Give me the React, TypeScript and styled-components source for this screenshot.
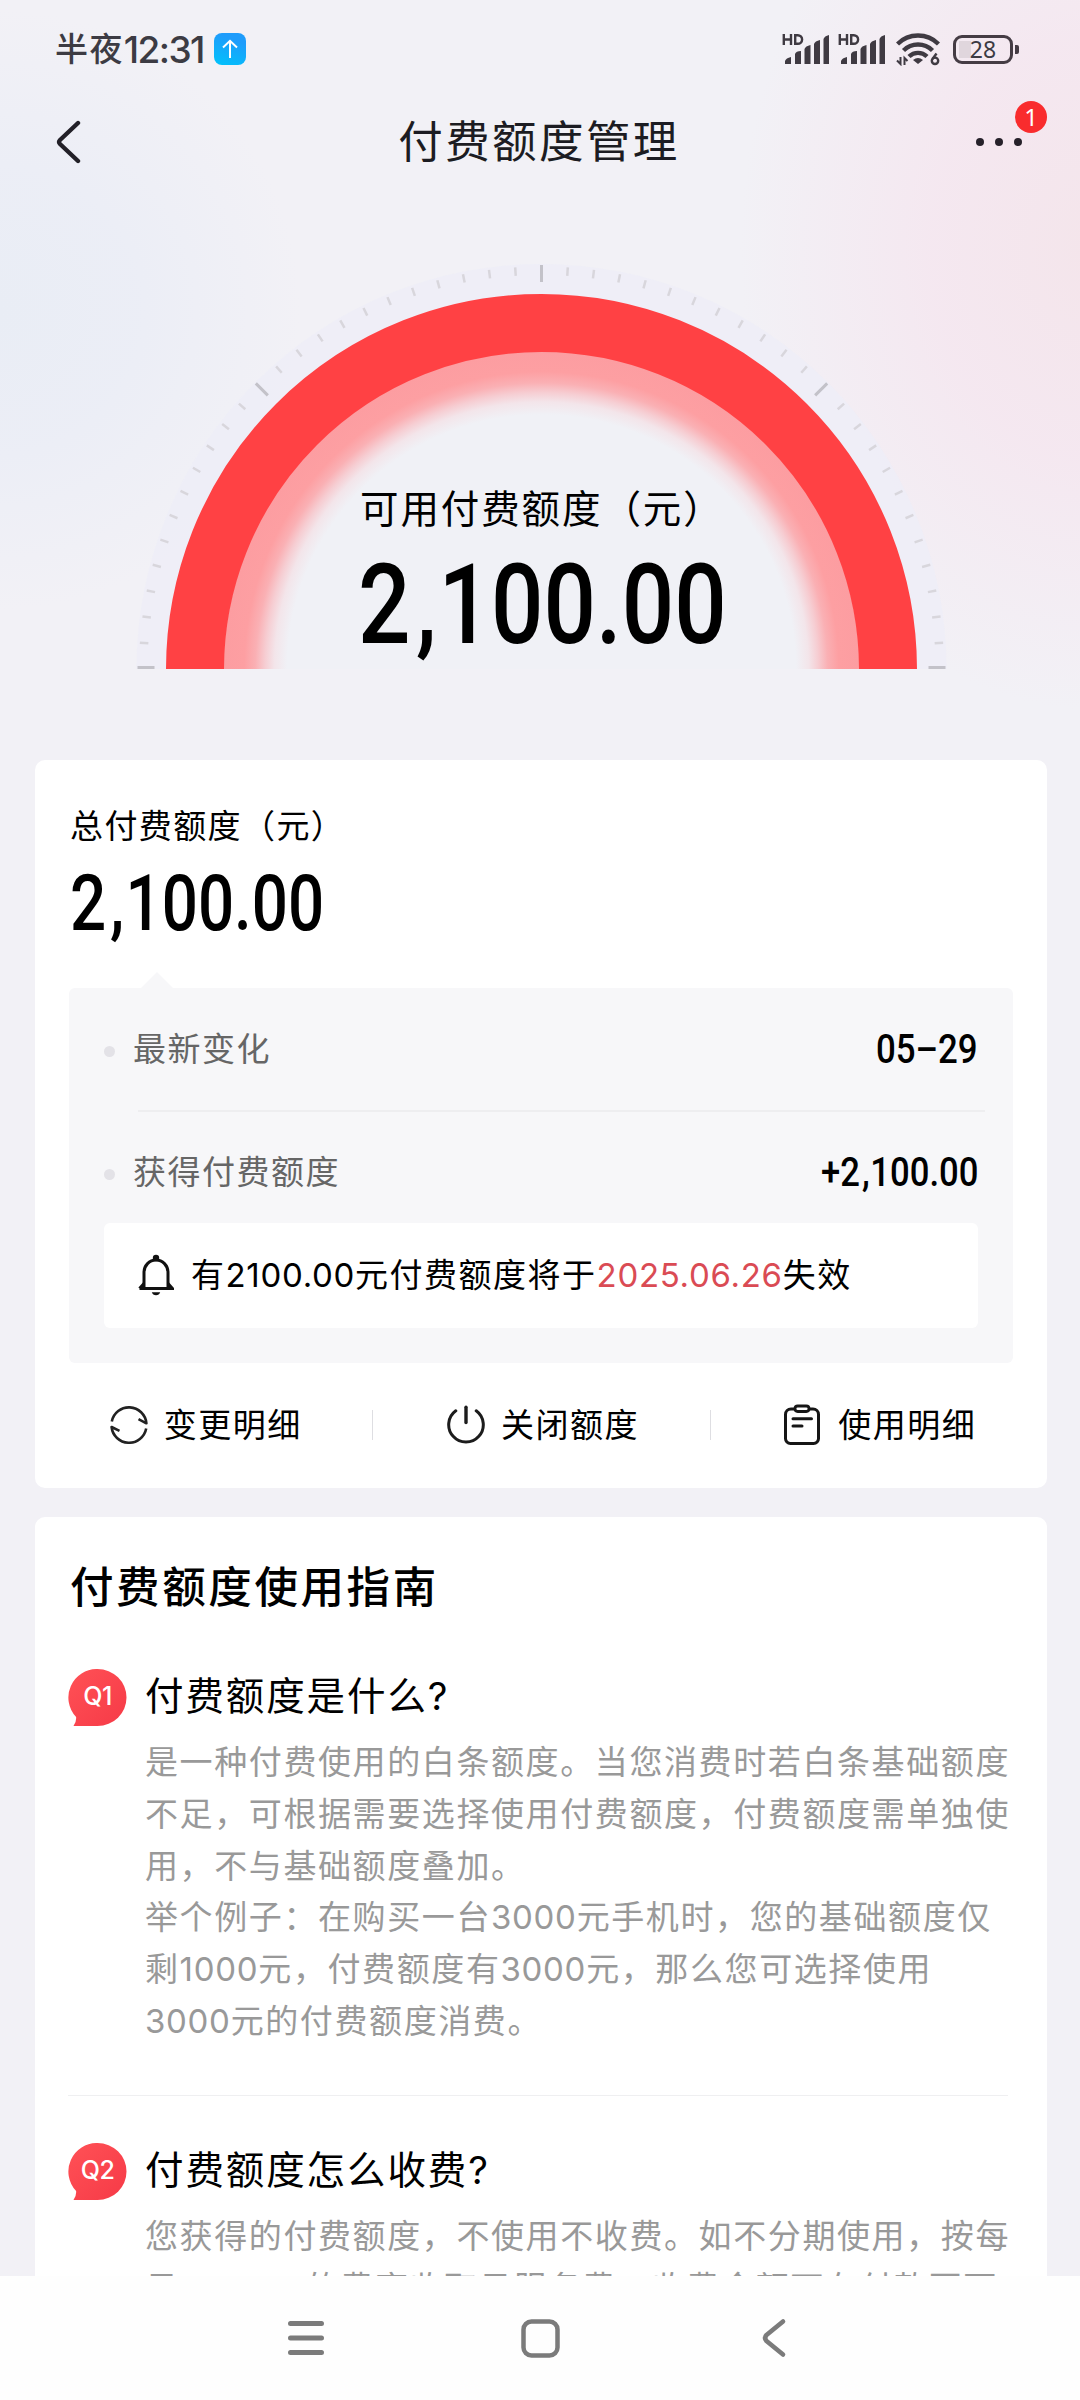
import React from "react";
import styled, { createGlobalStyle } from "styled-components";

const GlobalStyle = createGlobalStyle`
  *, *::before, *::after { box-sizing: border-box; }
  body {
    margin: 0;
    background: #f2f1f6;
    font-family: Inter, "Noto Sans CJK SC", sans-serif;
    text-spacing-trim: space-all;
    -webkit-font-smoothing: antialiased;
  }
  svg { display: block; flex: none; }
`;

const Screen = styled.div`
  width: 1080px;
  height: 2400px;
  display: flex;
  flex-direction: column;
  overflow: hidden;
  color: #000;
  background:
    radial-gradient(ellipse 350px 460px at 1090px 250px, #f4e5eb 0%, rgba(245, 230, 239, 0.85) 45%, rgba(243, 238, 245, 0) 100%),
    radial-gradient(ellipse 300px 300px at 0 310px, #e9edf5 0%, rgba(234, 237, 246, 0.8) 45%, rgba(242, 241, 246, 0) 100%),
    #f2f1f6;
`;

const Content = styled.main`
  height: 2276px;
  flex: none;
  display: flex;
  flex-direction: column;
  overflow: hidden;
`;

/* ---------- status bar ---------- */

const StatusBar = styled.div`
  flex: none;
  height: 98px;
  padding: 0 61px 0 55px;
  display: flex;
  align-items: center;
  justify-content: space-between;
  color: #3c3b43;
`;

const Clock = styled.div`
  display: flex;
  align-items: center;
  font-size: 33px;
  line-height: 44px;
  letter-spacing: 1.4px;
  font-weight: 500;
`;

const ClockDigits = styled.span`
  margin: 2px 10px 0 0;
  font-size: 37px;
  letter-spacing: -1.6px;
`;

const UploadChip = styled.span`
  width: 32px;
  height: 32px;
  border-radius: 8px;
  background: linear-gradient(20deg, #00c3fb, #1e9cfb 75%);
  display: grid;
  place-items: center;
`;

const StatusIcons = styled.div`
  display: flex;
  align-items: center;
`;

const Battery = styled.div`
  position: relative;
  margin-left: 13px;
  width: 60px;
  height: 29px;
  border: 3px solid #453c44;
  border-radius: 9px;
  background: linear-gradient(#e0d6dd, #e0d6dd) 3px 3px / 12px 17px no-repeat;
  display: grid;
  place-items: center;
  font-family: "Noto Sans", sans-serif;
  font-size: 23px;
  line-height: 23px;
  margin-right: 6px;

  &::after {
    content: "";
    position: absolute;
    right: -9px;
    top: 7px;
    width: 4px;
    height: 9px;
    border-radius: 0 2px 2px 0;
    background: #453c44;
  }
`;

/* ---------- title bar ---------- */

const TitleBar = styled.header`
  flex: none;
  height: 88px;
  padding: 0 58px 0 56px;
  display: grid;
  grid-template-columns: 1fr auto 1fr;
  align-items: center;
`;

const PageTitle = styled.h1`
  margin: 0;
  font-size: 44.5px;
  line-height: 60px;
  letter-spacing: 2.4px;
  font-weight: 400;
  color: #1c1c22;
`;

const More = styled.div`
  position: relative;
  justify-self: end;
  display: flex;
  gap: 11px;
`;

const Dot = styled.i`
  width: 8px;
  height: 8px;
  border-radius: 50%;
  background: #26212a;
`;

const Badge = styled.span`
  position: absolute;
  right: -25px;
  top: -37px;
  width: 32px;
  height: 32px;
  border-radius: 50%;
  background: #f92c2d;
  color: #fff;
  font-family: "Noto Sans", sans-serif;
  font-size: 24px;
  line-height: 32px;
  text-align: center;
`;

/* ---------- gauge ---------- */

const Gauge = styled.section`
  flex: none;
  display: grid;
  width: 812px;
  height: 407px;
  margin: 76px 0 91px 136px;

  > * { grid-area: 1 / 1; }
`;

const GaugeText = styled.div`
  z-index: 1;
  padding: 224px 0 0 222px;
`;

const GaugeLabel = styled.div`
  margin: 0 0 23px 2px;
  font-size: 38.5px;
  line-height: 46px;
  letter-spacing: 1.9px;
  white-space: nowrap;
`;

const Amount = styled.div<{ $size: number; $line: number; $scale?: number; $end?: boolean }>`
  width: max-content;
  font-family: Roboto, sans-serif;
  font-weight: 500;
  font-size: ${(p) => p.$size}px;
  line-height: ${(p) => p.$line}px;
  white-space: nowrap;
  transform: scaleX(${(p) => p.$scale ?? 0.85});
  transform-origin: ${(p) => (p.$end ? "right" : "left")} center;
`;

const Comma = styled.span`
  padding: 0 0.02em 0 0.06em;
`;

/* ---------- cards ---------- */

const Card = styled.section<{ $top: number }>`
  flex: none;
  margin: 0 33px 29px 35px;
  padding: ${(p) => p.$top}px 34px 0;
  border-radius: 10px;
  background: #fff;
`;

const CardLabel = styled.div`
  margin: 0 0 23px 1px;
  font-size: 33px;
  line-height: 40px;
  letter-spacing: 1.4px;
`;

const Total = styled.div`
  padding-left: 1px;
`;

const Panel = styled.div`
  position: relative;
  height: 375px;
  margin-top: 49px;
  padding: 0 35px;
  border-radius: 6px;
  background: #f7f7f9;

  &::before {
    content: "";
    position: absolute;
    left: 72px;
    top: -16px;
    border: 16px solid transparent;
    border-top: 0;
    border-bottom-color: #f7f7f9;
  }
`;

const Row = styled.div<{ $h: number; $shift?: number }>`
  height: ${(p) => p.$h}px;
  padding-top: ${(p) => p.$shift ?? 0}px;
  display: flex;
  align-items: center;
`;

const Bullet = styled.i`
  width: 11px;
  height: 11px;
  margin: 5px 18px 0 0;
  border-radius: 50%;
  background: #e3e2e7;
`;

const RowLabel = styled.span`
  flex: 1;
  font-size: 33px;
  line-height: 44px;
  letter-spacing: 1.5px;
  color: #666;
`;

const RowLine = styled.div`
  height: 2px;
  margin: 0 -7px 0 34px;
  background: #eeeef0;
`;

const Notice = styled.div`
  height: 105px;
  padding: 0 0 1px 34px;
  display: flex;
  align-items: center;
  gap: 17px;
  border-radius: 6px;
  background: #fff;
  font-size: 33px;
  line-height: 44px;
  letter-spacing: 1.5px;
  white-space: nowrap;
`;

const Figures = styled.span<{ $accent?: boolean }>`
  color: ${(p) => (p.$accent ? "#da4b54" : "inherit")};
  letter-spacing: 0.7px;
`;

const Actions = styled.div`
  height: 125px;
  margin: 0 -34px;
  padding-bottom: 1px;
  display: grid;
  grid-template-columns: repeat(3, 1fr);
  align-items: center;
`;

const Action = styled.div<{ $gap: number }>`
  height: 38px;
  padding-left: 4px;
  display: flex;
  align-items: center;
  justify-content: center;
  gap: ${(p) => p.$gap}px;
  font-size: 33px;
  letter-spacing: 1.5px;
  line-height: 38px;

  & + & {
    background: linear-gradient(#dedee2, #dedee2) 0 4px / 1px 30px no-repeat;
  }
`;

/* ---------- guide ---------- */

const GuideTitle = styled.h2`
  margin: 0 0 51px 1px;
  font-size: 43.5px;
  line-height: 60px;
  letter-spacing: 2.6px;
  font-weight: 500;
`;

const Faq = styled.article`
  display: grid;
  grid-template-columns: 58px 1fr;
  column-gap: 19px;
  margin-left: -1px;

  & + & {
    margin-top: 47px;
    margin-right: 5px;
    padding-top: 46px;
    border-top: 1px solid #efeff1;
  }
`;

const QMark = styled.div`
  display: grid;
  width: 59px;
  height: 57px;
  margin-top: 1px;
  color: #fff;
  font-size: 25px;
  line-height: 55px;
  letter-spacing: -0.5px;
  font-weight: 500;
  text-align: center;

  > * { grid-area: 1 / 1; }
  > span { z-index: 1; }
`;

const Question = styled.h3`
  margin: 0 0 13px;
  font-size: 38.5px;
  line-height: 56px;
  letter-spacing: 1.9px;
  font-weight: 400;
`;

const Answer = styled.div`
  grid-column: 2;
  font-size: 33px;
  line-height: 51.8px;
  letter-spacing: 1.6px;
  color: #999;
`;

const Line = styled.div`
  white-space: nowrap;
`;

/* ---------- system navigation ---------- */

const SystemNav = styled.nav`
  flex: none;
  height: 124px;
  padding: 0 293px 0 287px;
  display: flex;
  align-items: center;
  justify-content: space-between;
  background: #fefefe;

  > :nth-child(2) { margin-right: 7px; }
`;

/* ---------- drawings ---------- */

const Signal = ({ gap }: { gap: number }) => (
  <svg width="47" height="31" viewBox="0 0 47 31" style={{ marginLeft: gap }} fill="#3f3a42">
    <g stroke="#3f3a42" strokeWidth="2.4" fill="none">
      <path d="M1.8 0v11M9 0v11M1.8 5.5H9M13.2 1.200v8.600h2.600a4.300 4.300 0 0 0 0-8.600z" />
    </g>
    <path d="M3 30v-3q1-3 6-4v7zM13 30V20q1-3 6-3v13zM22.500 30V15q1-3 6-4v19zM32 30V10q1-3 6-4v24zM41.500 30V5q1-3 5.500-4v29z" />
  </svg>
);

const Wifi = () => (
  <svg width="44" height="34" viewBox="0 0 44 34" style={{ marginLeft: 11 }} fill="none" stroke="#3f3a42">
    <path d="M1.500 12a29 29 0 0 1 41 0" strokeWidth="4.400" />
    <path d="M7.500 18.500a20.500 20.500 0 0 1 29 0" strokeWidth="4.400" />
    <path d="M13 24.500a13 13 0 0 1 18 0" strokeWidth="4.400" />
    <path d="M22 32l-5-4q5-4 10 0z" fill="#3f3a42" stroke="none" />
    <path d="M1 28.500l3.500 3.500V25M8.500 33v-7l3 3" strokeWidth="2" />
    <circle cx="39" cy="28.800" r="3.200" strokeWidth="2.400" />
    <path d="M40.500 21.500l-4 5.500" strokeWidth="2.400" />
  </svg>
);

const CX = 405.5;
const CY = 407;

const ticks = Array.from({ length: 49 }, (_, i) => {
  const a = (i * 3.75 * Math.PI) / 180;
  const major = i % 12 === 0;
  const outer = major ? 404 : 402.5;
  const inner = major ? 387 : 394;
  const lift = i === 0 || i === 48 ? -1.5 : 0;
  return {
    major,
    x1: CX - outer * Math.cos(a),
    y1: CY - outer * Math.sin(a) + lift,
    x2: CX - inner * Math.cos(a),
    y2: CY - inner * Math.sin(a) + lift,
  };
});

const GaugeArc = () => (
  <svg width="812" height="407" viewBox="0 0 812 407">
    <defs>
      <radialGradient id="glow" gradientUnits="userSpaceOnUse" cx={CX} cy={CY} r="318">
        <stop offset="0.8" stopColor="#f0f1f6" />
        <stop offset="0.84" stopColor="#f3e5ea" />
        <stop offset="0.87" stopColor="#f6cdd2" />
        <stop offset="0.9" stopColor="#fab0b4" />
        <stop offset="0.935" stopColor="#fd9fa2" />
        <stop offset="1" stopColor="#fc9da1" />
      </radialGradient>
    </defs>
    <circle cx={CX} cy={CY} r="405" fill="#ededf7" opacity="0.8" />
    <circle cx={CX} cy={CY} r="318" fill="url(#glow)" />
    <circle cx={CX} cy={CY + 0.5} r="346.500" fill="none" stroke="#ff4144" strokeWidth="58" />
    {ticks.map((t, i) => (
      <line
        key={i}
        x1={t.x1}
        y1={t.y1}
        x2={t.x2}
        y2={t.y2}
        stroke={t.major ? "#c3c2c9" : "#d8d6dc"}
        strokeWidth={t.major ? 3 : 2.5}
      />
    ))}
  </svg>
);

const Bell = () => (
  <svg width="36" height="42" viewBox="0 0 36 42" fill="none" stroke="#111" strokeWidth="3">
    <path d="M6 34V18.500a12 12.500 0 0 1 24 0V34" />
    <path d="M1.500 34.500h33l-4.500-5M1.500 34.500l4.500-5" />
    <circle cx="18" cy="4" r="3.200" fill="#111" stroke="none" />
    <path d="M13.800 38.200h8.400q-1 3-4.200 3t-4.200-3z" fill="#111" stroke="none" />
  </svg>
);

const Refresh = () => (
  <svg width="38" height="38" viewBox="0 0 38 38" fill="none" stroke="#222" strokeWidth="2.600" strokeLinejoin="round">
    <path d="M1.800 15.500A17.500 17.500 0 0 1 36.400 17.300L28.500 13.200" />
    <path d="M36.200 22.500A17.500 17.500 0 0 1 1.600 21L9.500 24.800" />
  </svg>
);

const Power = () => (
  <svg width="38" height="40" viewBox="0 0 38 40" fill="none" stroke="#1c1c1c" strokeWidth="3" strokeLinecap="round">
    <path d="M8.800 5.800a17.300 17.300 0 1 0 20.400 0" />
    <path d="M19 2.300v15.200" strokeWidth="3.400" />
  </svg>
);

const Clipboard = () => (
  <svg width="36" height="42" viewBox="0 0 36 42" fill="none" stroke="#161616" strokeWidth="3" strokeLinecap="round">
    <path d="M10.500 5H7a5.500 5.500 0 0 0-5.500 5.500v23.800A5 5 0 0 0 6.500 39.500h23a5 5 0 0 0 5-5.200V10.500A5.500 5.500 0 0 0 29 5h-3.500" />
    <rect x="11" y="2" width="14" height="5.500" rx="2.700" strokeWidth="2.800" />
    <path d="M9 14.800h18.500M9 22h9" />
  </svg>
);

const Bubble = ({ id }: { id: string }) => (
  <svg width="59" height="57" viewBox="0 0 59 57">
    <defs>
      <linearGradient id={id} x1="0" y1="0" x2="1" y2="1">
        <stop offset="0" stopColor="#ff5156" />
        <stop offset="1" stopColor="#f63a47" />
      </linearGradient>
    </defs>
    <path d="M29.500 0A29 28.500 0 0 1 29.500 57H5.500q3-4 2.600-9A28.500 28.500 0 0 1 29.500 0z" fill={`url(#${id})`} />
  </svg>
);

const faqs = [
  {
    tag: "Q1",
    title: "付费额度是什么?",
    lines: [
      "是一种付费使用的白条额度。当您消费时若白条基础额度",
      "不足，可根据需要选择使用付费额度，付费额度需单独使",
      "用，不与基础额度叠加。",
      "举个例子：在购买一台3000元手机时，您的基础额度仅",
      "剩1000元，付费额度有3000元，那么您可选择使用",
      "3000元的付费额度消费。",
    ],
  },
  {
    tag: "Q2",
    title: "付费额度怎么收费?",
    lines: [
      "您获得的付费额度，不使用不收费。如不分期使用，按每",
      "日0.055%的费率收取日服务费，收费金额可在付款页面",
    ],
  },
];

/* Runs of digits are set a little tighter than the characters round them. */
const withFigures = (text: string) =>
  text.split(/([\d.%]+)/).map((part, i) => (i % 2 ? <Figures key={i}>{part}</Figures> : part));

export default function App() {
  return (
    <>
      <GlobalStyle />
      <Screen>
        <Content>
          <StatusBar>
            <Clock>
              半夜<ClockDigits>12:31</ClockDigits>
              <UploadChip>
                <svg width="18" height="20" viewBox="0 0 18 20" fill="none" stroke="#fff" strokeWidth="2">
                  <path d="M9 19V2M2 8.500L9 1.800l7 6.700" />
                </svg>
              </UploadChip>
            </Clock>
            <StatusIcons>
              <Signal gap={0} />
              <Signal gap={9} />
              <Wifi />
              <Battery>28</Battery>
            </StatusIcons>
          </StatusBar>

          <TitleBar>
            <svg width="26" height="44" viewBox="0 0 26 44" fill="none" stroke="#222028" strokeWidth="4.400" strokeLinecap="round" strokeLinejoin="round">
              <path d="M22 3L4 20q-2 2 0 4l18 17" />
            </svg>
            <PageTitle>付费额度管理</PageTitle>
            <More>
              <Dot />
              <Dot />
              <Dot />
              <Badge>1</Badge>
            </More>
          </TitleBar>

          <Gauge>
            <GaugeArc />
            <GaugeText>
              <GaugeLabel>可用付费额度（元）</GaugeLabel>
              <Amount $size={111} $line={100} $scale={0.832}>
                2<Comma>,</Comma>100.00
              </Amount>
            </GaugeText>
          </Gauge>

          <Card $top={46}>
            <CardLabel>总付费额度（元）</CardLabel>
            <Total>
              <Amount $size={77} $line={70} $scale={0.827}>
                2<Comma>,</Comma>100.00
              </Amount>
            </Total>
            <Panel>
              <Row $h={122}>
                <Bullet />
                <RowLabel>最新变化</RowLabel>
                <Amount $size={41} $line={44} $end>05–29</Amount>
              </Row>
              <RowLine />
              <Row $h={111} $shift={9}>
                <Bullet />
                <RowLabel>获得付费额度</RowLabel>
                <Amount $size={41} $line={44} $scale={0.845} $end>
                  +2<Comma>,</Comma>100.00
                </Amount>
              </Row>
              <Notice>
                <Bell />
                <span>
                  有<Figures>2100.00</Figures>元付费额度将于<Figures $accent>2025.06.26</Figures>失效
                </span>
              </Notice>
            </Panel>
            <Actions>
              <Action $gap={16}><Refresh />变更明细</Action>
              <Action $gap={16}><Power />关闭额度</Action>
              <Action $gap={18}><Clipboard />使用明细</Action>
            </Actions>
          </Card>

          <Card $top={40}>
            <GuideTitle>付费额度使用指南</GuideTitle>
            {faqs.map((f) => (
              <Faq key={f.tag}>
                <QMark>
                  <Bubble id={`bubble-${f.tag}`} />
                  <span>{f.tag}</span>
                </QMark>
                <Question>{f.title}</Question>
                <Answer>
                  {f.lines.map((l) => (
                    <Line key={l}>{withFigures(l)}</Line>
                  ))}
                </Answer>
              </Faq>
            ))}
          </Card>
        </Content>

        <SystemNav>
          <svg width="38" height="38" viewBox="0 0 38 38" stroke="#7b7b7b" strokeWidth="5" strokeLinecap="round">
            <path d="M3.500 4.500h31M3.500 19h31M3.500 33.500h31" />
          </svg>
          <svg width="39" height="39" viewBox="0 0 39 39" fill="none" stroke="#7b7b7b" strokeWidth="4.500">
            <rect x="2.500" y="2.500" width="34" height="34" rx="8" />
          </svg>
          <svg width="25" height="40" viewBox="0 0 25 40" fill="none" stroke="#7b7b7b" strokeWidth="4.600" strokeLinecap="round" strokeLinejoin="round">
            <path d="M21 3.500L4.500 17q-3 3 0 6L21 36.500" />
          </svg>
        </SystemNav>
      </Screen>
    </>
  );
}
